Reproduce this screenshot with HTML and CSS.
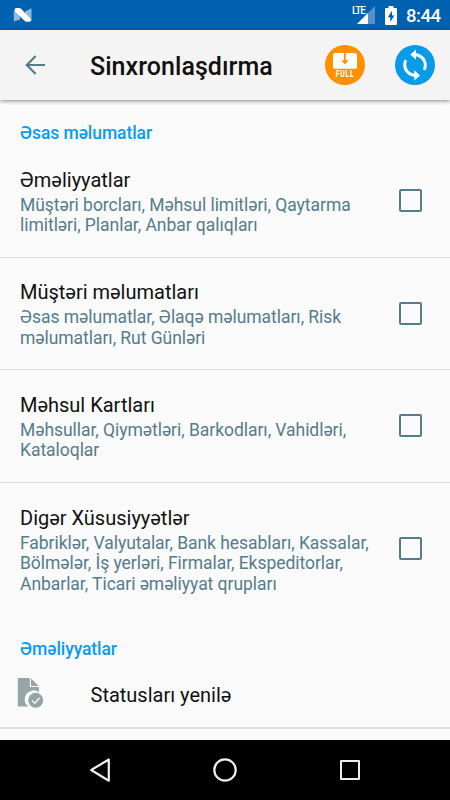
FILE: index.html
```html
<!DOCTYPE html>
<html lang="az">
<head>
<meta charset="utf-8">
<title>Sinxronlaşdırma</title>
<link rel="stylesheet" href="styles.css">
</head>
<body>
<div class="screen">
  <div class="status">
    <svg class="logo" width="20" height="16" viewBox="0 0 20 16"><path fill="#8fb9df" d="M.8 3.500L7 6v6.500l-6.200 2zM12 4.500l6.500-3.300v13L12 10z"/><path fill="#fff" d="M1.500 2.800q0-1.800 2-1.800h2.700q1 0 1.600.6l10 10.400q1 2.700-1.800 2.700h-2.500q-1 0-1.700-.6L2.500 5q-1-1-1-2.200z"/></svg>
    <span class="lte">LTE</span>
    <svg class="signal" width="18" height="18" viewBox="0 0 18 18"><path fill="#5791c7" d="M0 18L18 0v18z"/><path fill="#fff" d="M0 18L11 7v11z"/></svg>
    <svg class="battery" width="12" height="19" viewBox="0 0 12 19"><path fill="#fff" d="M3.500 0h5v2H11q1 0 1 1v15q0 1-1 1H1q-1 0-1-1V3q0-1 1-1h2.500z"/><path fill="#0061b1" d="M7 5L2.700 11.200h2.500V16l4.200-6.400H7z"/></svg>
    <span class="clock">8:44</span>
  </div>
  <header class="appbar">
    <svg class="back" width="20" height="20" viewBox="0 0 20 20" fill="none" stroke="#557c8c" stroke-width="2.200"><path d="M20 10H2M10.700 1L1.800 10l8.900 9"/></svg>
    <h1>Sinxronlaşdırma</h1>
    <svg class="full" width="40" height="40" viewBox="0 0 40 40"><circle cx="20" cy="20" r="20" fill="#ff9100"/><path fill="#fff" d="M9.800 8h20.600q1.600 0 1.600 1.700v12.600q0 1.500-1.500 1.500H9.500Q8 23.800 8 22.300V9.700Q8 8 9.800 8z"/><path fill="#ff9100" d="M19 8h1.800v7.200h2.700L19.900 19.400l-3.600-4.200H19z"/><text transform="translate(10.800 32) scale(.72 1)" class="fulltext">FULL</text></svg>
    <svg class="sync" width="40" height="40" viewBox="0 0 40 40"><circle cx="20" cy="20" r="20" fill="#079be8"/><g fill="none" stroke="#fff" stroke-width="2.900"><path d="M19 9.500c6.300 0 11.300 4.700 11.300 10.500q0 2.500-1 4.800"/><path d="M21 30.500C14.700 30.500 9.700 25.800 9.700 20q0-2.500 1-4.800"/></g><path fill="#fff" d="M21 4.500v10.200L15.300 9.600zM19.300 35.500V25.300l5.700 5.100z"/></svg>
  </header>
  <main class="content">
    <h2>Əsas məlumatlar</h2>
    <section class="row">
      <div class="info"><h3>Əməliyyatlar</h3><p>Müştəri borcları, Məhsul limitləri, Qaytarma<br>limitləri, Planlar, Anbar qalıqları</p></div>
      <span class="check"></span>
    </section>
    <section class="row">
      <div class="info"><h3>Müştəri məlumatları</h3><p>Əsas məlumatlar, Əlaqə məlumatları, Risk<br>məlumatları, Rut Günləri</p></div>
      <span class="check"></span>
    </section>
    <section class="row">
      <div class="info"><h3>Məhsul Kartları</h3><p>Məhsullar, Qiymətləri, Barkodları, Vahidləri,<br>Kataloqlar</p></div>
      <span class="check"></span>
    </section>
    <section class="row last">
      <div class="info"><h3>Digər Xüsusiyyətlər</h3><p>Fabriklər, Valyutalar, Bank hesabları, Kassalar,<br>Bölmələr, İş yerləri, Firmalar, Ekspeditorlar,<br>Anbarlar, Ticari əməliyyat qrupları</p></div>
      <span class="check"></span>
    </section>
    <h2 class="second">Əməliyyatlar</h2>
    <section class="action">
      <svg width="27" height="31" viewBox="0 0 27 31"><path fill="#95a5a6" d="M.8 0h12v9h9.100V14A8.500 8.500 0 0 0 11.300 28.500H.8zM14 .3L21.700 8H14z"/><circle cx="18.700" cy="22.300" r="7.500" fill="#95a5a6"/><path d="M15 22.500l2.700 2.800 4.800-5.300" fill="none" stroke="#fafafa" stroke-width="1.200"/></svg>
      <h3>Statusları yenilə</h3>
    </section>
  </main>
  <nav class="navbar">
    <svg width="250" height="26" viewBox="0 0 250 26" fill="none" stroke="#eee" stroke-width="2.200" stroke-linejoin="round"><path d="M18.800 2.500v21.200L1.200 13z"/><circle cx="135" cy="13" r="10.700"/></svg>
    <span class="recent"></span>
  </nav>
</div>
</body>
</html>
```
FILE: styles.css
```css
* { box-sizing: border-box; }
body { margin: 0; font-family: Roboto, sans-serif; }
h1, h2, h3, p { margin: 0; font-weight: 400; white-space: nowrap; }
svg { display: block; flex: none; }
.screen { width: 450px; height: 800px; display: flex; flex-direction: column; overflow: hidden; background: #fafafa; }
.status { height: 30px; flex: none; display: flex; align-items: flex-start; background: #0061b1; color: #fff; padding: 6px 0 0 13px; }
.logo { margin-top: 1px; margin-right: 319px; }
.lte { font-size: 10px; font-weight: 500; line-height: 10px; width: 5px; letter-spacing: -1px; }
.signal { margin-right: 10px; }
.battery { margin-right: 9px; }
.clock { font-size: 18.5px; font-weight: 500; line-height: 20px; letter-spacing: -.5px; }
.appbar { position: relative; height: 70px; flex: none; display: flex; align-items: center; padding-left: 25px; background: #f4f4f4; box-shadow: 0 1px 4px rgba(0,0,0,.45); }
h1 { width: 235px; margin-left: 45px; font-size: 25px; font-weight: 500; color: #111; line-height: 30px; padding-top: 3px; letter-spacing: .05px; }
.sync { margin-left: 30px; }
.fulltext { font: 800 9.500px Roboto, sans-serif; fill: #fff; letter-spacing: 1px; }
.content { flex: 1; min-height: 0; }
h2 { padding: 23px 20px 0; height: 45px; font-size: 17.5px; font-weight: 500; line-height: 21px; color: #079cf0; letter-spacing: -.08px; }
.row { height: 112.5px; display: flex; align-items: center; justify-content: space-between; padding: 0 28px 0 20px; border-bottom: 1px solid #dcdcdc; }
.row.last { height: 133px; border: 0; }
.row h3 { margin: -1px 0 1px; }
.info { padding-top: 2px; }
h3 { font-size: 20px; line-height: 27px; color: #111; }
p { font-size: 17.5px; line-height: 20.600px; color: #557c8c; letter-spacing: -.04px; }
.check { width: 23px; height: 23px; border: 2px solid #557c8c; border-radius: 2px; }
.last .check { margin-top: -2px; }
.second { padding-top: 23px; height: 45px; }
.action { display: flex; align-items: center; height: 68px; padding-left: 17px; gap: 46.500px; border-bottom: 2px solid #e1e1e1; }
.action svg { margin-top: 0; }
.action h3 { padding-top: 4px; }
.navbar { height: 60px; flex: none; display: flex; align-items: center; padding-left: 90px; background: #000; }
.recent { width: 20px; height: 20px; border: 2px solid #eee; border-radius: 1px; }
```
